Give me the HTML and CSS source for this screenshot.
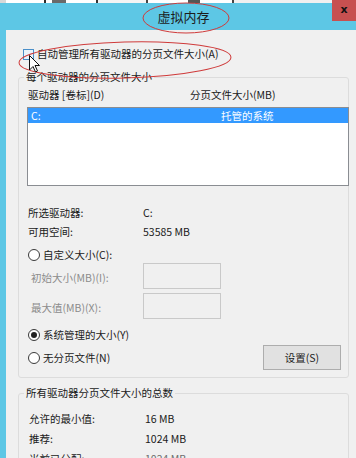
FILE: index.html
```html
<!DOCTYPE html>
<html lang="zh-CN">
<head>
<meta charset="utf-8">
<title>虚拟内存</title>
<link rel="stylesheet" href="styles.css">
</head>
<body>
<div class="strip"></div>
<div class="titlebar">
  <span class="title">虚拟内存</span>
  <span class="close">x</span>
</div>
<div class="client">
  <div class="check-row"><span class="checkbox"></span><span>自动管理所有驱动器的分页文件大小(A)</span></div>

  <fieldset class="group g1">
    <legend>每个驱动器的分页文件大小</legend>
    <div class="list-head"><span class="col1">驱动器 [卷标](D)</span><span>分页文件大小(MB)</span></div>
    <div class="listbox">
      <div class="list-item selected"><span class="col1">C:</span><span>托管的系统</span></div>
    </div>
    <div class="kv first"><span class="k">所选驱动器:</span><span>C:</span></div>
    <div class="kv"><span class="k">可用空间:</span><span>53585 MB</span></div>

    <div class="radio-row r1"><span class="radio"></span><span>自定义大小(C):</span></div>
    <div class="input-row ir1"><span class="ilabel">初始大小(MB)(I):</span><span class="textbox"></span></div>
    <div class="input-row ir2"><span class="ilabel">最大值(MB)(X):</span><span class="textbox"></span></div>
    <div class="radio-row r2"><span class="radio checked"></span><span>系统管理的大小(Y)</span></div>
    <div class="radio-row r3"><span class="radio"></span><span>无分页文件(N)</span><span class="button">设置(S)</span></div>
  </fieldset>

  <fieldset class="group g2">
    <legend>所有驱动器分页文件大小的总数</legend>
    <div class="kv2 first"><span class="k">允许的最小值:</span><span>16 MB</span></div>
    <div class="kv2"><span class="k">推荐:</span><span>1024 MB</span></div>
    <div class="kv2"><span class="k">当前已分配:</span><span class="muted">1024 MB</span></div>
  </fieldset>
</div>

<svg class="annot" width="356" height="458" viewBox="0 0 356 458">
  <ellipse cx="186" cy="18" rx="43" ry="15" fill="none" stroke="#cf3b3b" stroke-width="1"/>
  <ellipse cx="125" cy="60" rx="106" ry="18" transform="rotate(-1.5 125 60)" fill="none" stroke="#cf3b3b" stroke-width="1"/>
  <path d="M29.5 55.5 L29.5 70 L33 66.5 L35.5 72 L37.5 71 L35 65.5 L39.5 65.5 Z" fill="#fff" stroke="#111" stroke-width="1" stroke-linejoin="round"/>
</svg>
</body>
</html>
```

FILE: styles.css
```css
* { box-sizing: border-box; }

html, body {
  margin: 0;
  padding: 0;
}

body {
  width: 356px;
  height: 458px;
  overflow: hidden;
  position: relative;
  background: #5dc7e5;
  font-family: "Noto Sans CJK SC", "Noto Sans", sans-serif;
  font-size: 10.5px;
  line-height: 14px;
  color: #1a1a1a;
}

.strip {
  height: 3px;
  background: linear-gradient(90deg, #d8d8d8 0 6px, #ffffff 6px 44px, #2a2a2a 44px 46px, #ffffff 46px 52px, #6a6a6a 52px 66px, #ffffff 66px 96px, #333 96px 98px, #f4f4f4 98px 146px, #444 146px 148px, #ffffff 148px 188px, #555 188px 200px, #ffffff 200px 232px, #444 232px 234px, #f0f0f0 234px);
}

.titlebar {
  height: 27px;
  display: flex;
  align-items: flex-start;
}

.title {
  flex: 1;
  padding-left: 35px;
  text-align: center;
  font-size: 13px;
  line-height: 27px;
  color: #1c1c1c;
}

.close {
  width: 24px;
  height: 21px;
  margin-top: -3px;
  background: #c75050;
  color: #111;
  font-family: "DejaVu Sans", sans-serif;
  font-weight: bold;
  font-size: 11px;
  line-height: 20px;
  text-align: center;
}

.client {
  margin-left: 6px;
  height: 428px;
  overflow: hidden;
  background: #f0f0f0;
  padding-top: 17px;
}

.check-row {
  display: flex;
  align-items: center;
  gap: 3px;
  height: 14px;
  padding-left: 17px;
}

.checkbox {
  width: 11px;
  height: 11px;
  border: 1px solid #4a8fc9;
  background: #eaf3fb;
}

.group {
  margin: 9px 0 0 12px;
  width: 331px;
  padding: 0 0 7px 0;
  border: 1px solid #dcdcdc;
  border-radius: 3px;
  min-width: 0;
}

.group legend {
  margin-left: 5px;
  padding: 0 2px;
  line-height: 14px;
}

.g2 {
  margin-top: 8px;
}

.list-head {
  display: flex;
  margin-top: 4px;
  padding-left: 9px;
}

.list-head .col1 { width: 162px; }

.listbox {
  margin: 5px 0 0 8px;
  width: 322px;
  height: 79px;
  border: 1px solid #8a8d92;
  background: #ffffff;
}

.list-item {
  display: flex;
  height: 15px;
  line-height: 15px;
  padding-left: 3px;
}

.list-item .col1 { width: 190px; }

.selected {
  background: #3399ff;
  color: #ffffff;
}

.kv, .kv2 {
  display: flex;
  margin-top: 5px;
  padding-left: 9px;
}

.kv.first { margin-top: 20px; }

.kv .k { width: 115px; }

.kv2 { padding-left: 10px; margin-top: 6px; }
.kv2.first { margin-top: 12px; }
.kv2 .k { width: 116px; }

.muted { color: #6d6d6d; }

.radio-row {
  display: flex;
  align-items: center;
  gap: 3px;
  height: 14px;
  padding-left: 9px;
}

.r1 { margin-top: 9px; }
.r2 { margin-top: 9px; }
.r3 { margin-top: 3px; height: 25px; }

.radio {
  width: 12px;
  height: 12px;
  border: 1px solid #3a3a3a;
  border-radius: 50%;
  background: #ffffff;
  display: flex;
  align-items: center;
  justify-content: center;
}

.radio.checked::after {
  content: "";
  width: 6px;
  height: 6px;
  border-radius: 50%;
  background: #222;
}

.input-row {
  display: flex;
  align-items: center;
  height: 26px;
  padding-left: 12px;
  color: #8c8c8c;
}

.ir1 { margin-top: 1px; }
.ir2 { margin-top: 4px; }

.ilabel {
  width: 112px;
  padding-top: 3px;
}

.textbox {
  width: 78px;
  height: 26px;
  border: 1px solid #c9c9c9;
  background: #f0f0f0;
}

.button {
  margin-left: auto;
  margin-right: 7px;
  width: 78px;
  height: 25px;
  border: 1px solid #adadad;
  background: #e1e1e1;
  text-align: center;
  line-height: 23px;
}

.annot {
  position: absolute;
  left: 0;
  top: 0;
  pointer-events: none;
}
```
